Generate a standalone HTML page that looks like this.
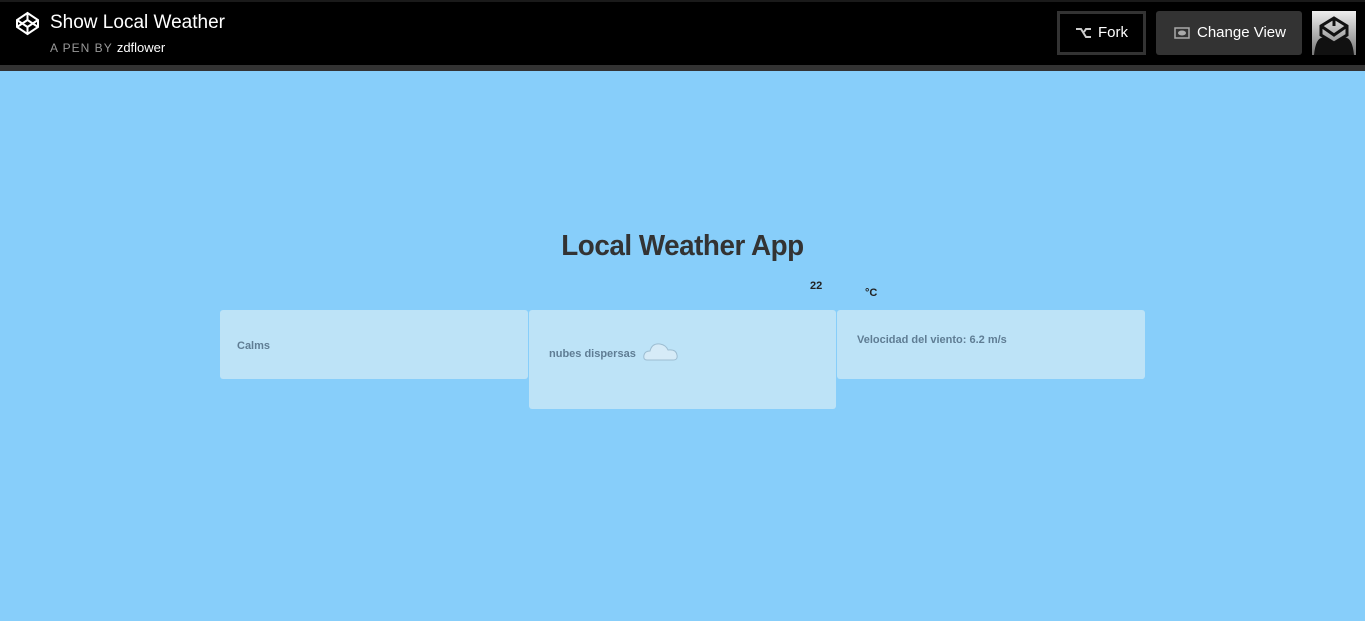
<!DOCTYPE html>
<html><head><meta charset="utf-8"><style>
*{margin:0;padding:0;box-sizing:border-box}
body{width:1365px;height:621px;background:#87cefa;font-family:"Liberation Sans",sans-serif;position:relative;overflow:hidden}
.hdr{position:absolute;left:0;top:0;width:1365px;height:65px;background:#000;border-top:2px solid #1a1a1a}
.bar{position:absolute;left:0;top:65px;width:1365px;height:6px;background:#333}
.t{position:absolute;left:50px;top:12px;color:#fff;font-size:19px}
.s{position:absolute;left:50px;top:40px;color:#999;font-size:12px;letter-spacing:1px}
.s b{color:#fff;font-weight:normal;letter-spacing:0;font-size:13px}
.fork{position:absolute;left:1057px;top:11px;width:89px;height:44px;border:3px solid #333;color:#fff;font-size:15px;line-height:38px;padding-left:38px}
.cv{position:absolute;left:1156px;top:11px;width:146px;height:44px;background:#333;border-radius:3px;color:#fff;font-size:15px;line-height:44px;padding-left:41px}
.av{position:absolute;left:1312px;top:11px;width:44px;height:44px;background:linear-gradient(#eee,#777)}
h1{position:absolute;left:0;width:1365px;top:230px;text-align:center;font-size:29px;color:#333;font-weight:bold;letter-spacing:-0.5px;transform:scaleX(0.96)}
.card{position:absolute;background:#bde3f7;border-radius:3px;color:#5f7d94;font-size:11px;font-weight:bold}
</style></head><body>
<div class="hdr"></div><div class="bar"></div>
<svg style="position:absolute;left:15px;top:11px" width="25" height="25" viewBox="0 0 25 25" fill="none" stroke="#fff" stroke-width="2"><path d="M12.5 2L23 9v7l-10.5 7L2 16V9z M2 9l10.5 7L23 9 M2 16l10.5-7L23 16 M12.5 2v7 M12.5 16v7"/></svg>
<div class="t">Show Local Weather</div>
<div class="s">A PEN BY <b>zdflower</b></div>
<div class="fork"><svg style="position:absolute;left:16px;top:13px" width="16" height="12" viewBox="0 0 16 12" fill="none" stroke="#ccc" stroke-width="2"><path d="M0 2h5l5 8h5 M8 5l2-3h5"/></svg>Fork</div>
<div class="cv"><svg style="position:absolute;left:18px;top:16px" width="16" height="12" viewBox="0 0 16 12"><rect x="1" y="1" width="14" height="10" fill="none" stroke="#aaa" stroke-width="1.5"/><ellipse cx="8" cy="6" rx="4" ry="2.5" fill="#aaa"/></svg>Change View</div>
<div class="av"><svg width="44" height="44" viewBox="0 0 44 44"><path d="M2 44 Q4 24 13 27 L22 33 L31 27 Q40 24 42 44z" fill="#111"/><path d="M22 7L35 15v9L22 32 9 24v-9z M9 15l13 9 13-9 M22 7v8" fill="none" stroke="#111" stroke-width="3"/></svg></div>
<h1>Local Weather App</h1>
<div style="position:absolute;left:810px;top:280px;font-size:11px;font-weight:bold;color:#222">22</div>
<div style="position:absolute;left:865px;top:287px;font-size:11px;font-weight:bold;color:#222">°C</div>
<div class="card" style="left:220px;top:310px;width:308px;height:69px;padding:30px 0 0 17px">Calms</div>
<div class="card" style="left:529px;top:310px;width:307px;height:99px;padding:38px 0 0 20px">nubes dispersas
<svg style="position:absolute;left:114px;top:30px" width="36" height="22" viewBox="0 0 36 22"><path d="M4 20 Q0 20 1 15 Q2 11 7 11 Q9 3 17 4 Q23 5 25 10 Q33 9 34 15 Q35 20 30 20z" fill="#d6ebf7" stroke="#9dbdd1" stroke-width="1"/></svg></div>
<div class="card" style="left:837px;top:310px;width:308px;height:69px;padding:24px 0 0 20px">Velocidad del viento: 6.2 m/s</div>
</body></html>
